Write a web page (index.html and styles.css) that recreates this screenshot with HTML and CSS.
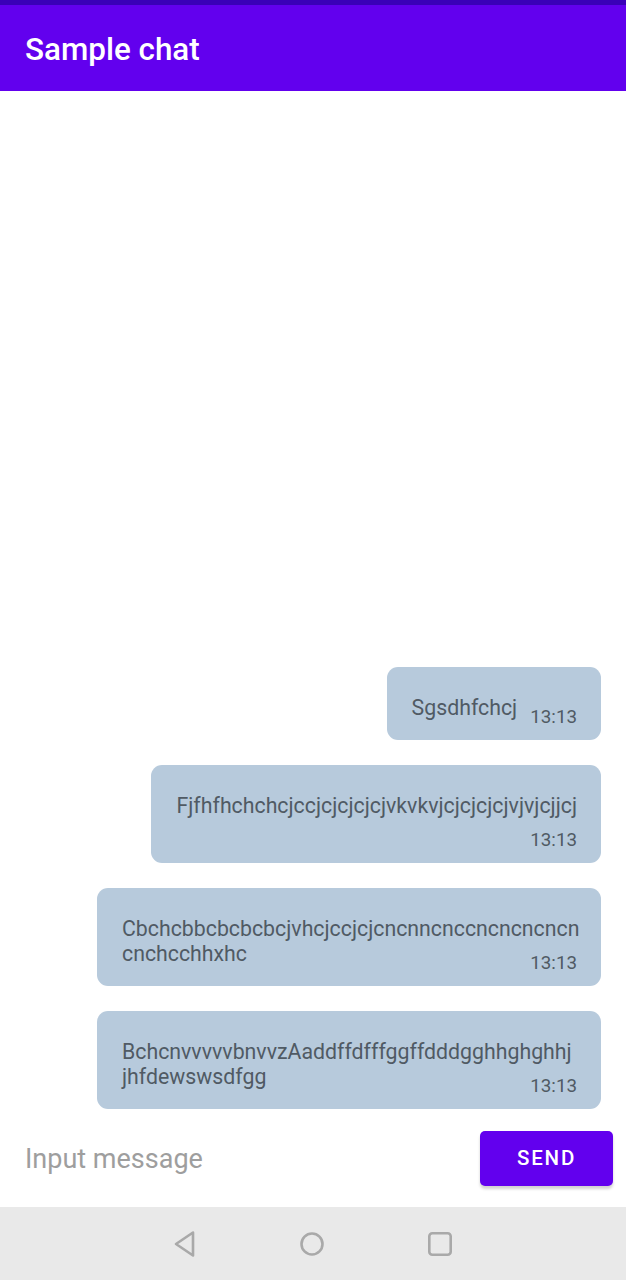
FILE: index.html
```html
<!DOCTYPE html>
<html lang="en">
<head>
<meta charset="utf-8">
<title>Sample chat</title>
<link rel="stylesheet" href="styles.css">
</head>
<body>
<div class="screen">
  <div class="status-bar"></div>
  <header class="app-bar">
    <h1 class="app-title">Sample chat</h1>
  </header>
  <main class="messages">
    <div class="bubble bubble--row">
      <span class="msg-text">Sgsdhfchcj</span>
      <span class="msg-time">13:13</span>
    </div>
    <div class="bubble bubble--col">
      <span class="msg-text">Fjfhfhchchcjccjcjcjcjcjvkvkvjcjcjcjcjvjvjcjjcj</span>
      <span class="msg-time">13:13</span>
    </div>
    <div class="bubble bubble--col bubble--wrapped">
      <span class="msg-text">Cbchcbbcbcbcbcjvhcjccjcjcncnncnccncncncncn<br>cnchcchhxhc</span>
      <span class="msg-time">13:13</span>
    </div>
    <div class="bubble bubble--col bubble--wrapped">
      <span class="msg-text">BchcnvvvvvbnvvzAaddffdfffggffdddgghhghghhj<br>jhfdewswsdfgg</span>
      <span class="msg-time">13:13</span>
    </div>
  </main>
  <div class="composer">
    <input class="composer-input" type="text" placeholder="Input message">
    <button class="send-btn" type="button">SEND</button>
  </div>
  <nav class="nav-bar">
    <svg class="nav-icon" width="26" height="28" viewBox="0 0 26 28" aria-hidden="true">
      <path d="M21 2.5 L4 14 L21 25.5 Z" fill="none" stroke="#a9a9a9" stroke-width="2.6" stroke-linejoin="round"/>
    </svg>
    <svg class="nav-icon" width="28" height="28" viewBox="0 0 28 28" aria-hidden="true">
      <circle cx="14" cy="14" r="10.5" fill="none" stroke="#a9a9a9" stroke-width="2.6"/>
    </svg>
    <svg class="nav-icon" width="28" height="28" viewBox="0 0 28 28" aria-hidden="true">
      <rect x="3.3" y="3.3" width="21.4" height="21.4" rx="3" fill="none" stroke="#a9a9a9" stroke-width="2.6"/>
    </svg>
  </nav>
</div>
</body>
</html>
```

FILE: styles.css
```css
* { box-sizing: border-box; }

html, body {
  margin: 0;
  padding: 0;
  background: #ffffff;
}

body {
  font-family: Roboto, "Noto Sans", "Liberation Sans", sans-serif;
}

.screen {
  width: 626px;
  height: 1280px;
  display: flex;
  flex-direction: column;
  overflow: hidden;
}

.status-bar {
  height: 5px;
  background: #3a00b8;
  flex: none;
}

.app-bar {
  height: 86px;
  background: #6200ee;
  display: flex;
  align-items: center;
  padding: 2px 25px 0;
  flex: none;
}

.app-title {
  margin: 0;
  color: #ffffff;
  font-size: 31.4px;
  font-weight: 500;
  letter-spacing: 0;
}

.messages {
  flex: 1;
  display: flex;
  flex-direction: column;
  justify-content: flex-end;
  align-items: flex-end;
  gap: 25px;
  padding: 0 25px 0 0;
}

.bubble {
  background: #b7cadc;
  border-radius: 11px;
  padding: 28px 24px 12px 25px;
  color: #505a64;
  max-width: 504px;
}

.bubble--wrapped {
  width: 504px;
}

.bubble--row {
  display: flex;
  align-items: flex-start;
}

.bubble--col {
  display: flex;
  flex-direction: column;
  align-items: stretch;
}

.msg-text {
  font-size: 21.3px;
  line-height: 25px;
}

.bubble--col .msg-text {
  min-height: 50px;
  white-space: nowrap;
}

.msg-time {
  font-size: 18.8px;
  line-height: 22px;
}

.bubble--row .msg-time {
  margin: 11px 0 0 13px;
}

.bubble--col .msg-time {
  margin-top: -14px;
  align-self: flex-end;
}

.composer {
  height: 98px;
  display: flex;
  align-items: center;
  padding: 0 13px 0 25px;
  flex: none;
}

.composer-input {
  flex: 1;
  min-width: 0;
  border: none;
  outline: none;
  background: transparent;
  font-family: Roboto, "Noto Sans", sans-serif;
  font-size: 27px;
  color: #333;
  padding: 0;
  margin-top: 2px;
}

.composer-input::placeholder {
  color: #9e9e9e;
}

.send-btn {
  width: 133px;
  height: 55px;
  background: #6200ee;
  color: #ffffff;
  border: none;
  border-radius: 5px;
  font-family: Roboto, "Noto Sans", sans-serif;
  font-size: 20.5px;
  font-weight: 500;
  letter-spacing: 1.8px;
  box-shadow: 0 3px 3px rgba(0, 0, 0, 0.18);
}

.nav-bar {
  height: 73px;
  background: #e9e9e9;
  display: flex;
  align-items: center;
  justify-content: center;
  gap: 100px;
  flex: none;
}

.nav-icon {
  display: block;
}
```
